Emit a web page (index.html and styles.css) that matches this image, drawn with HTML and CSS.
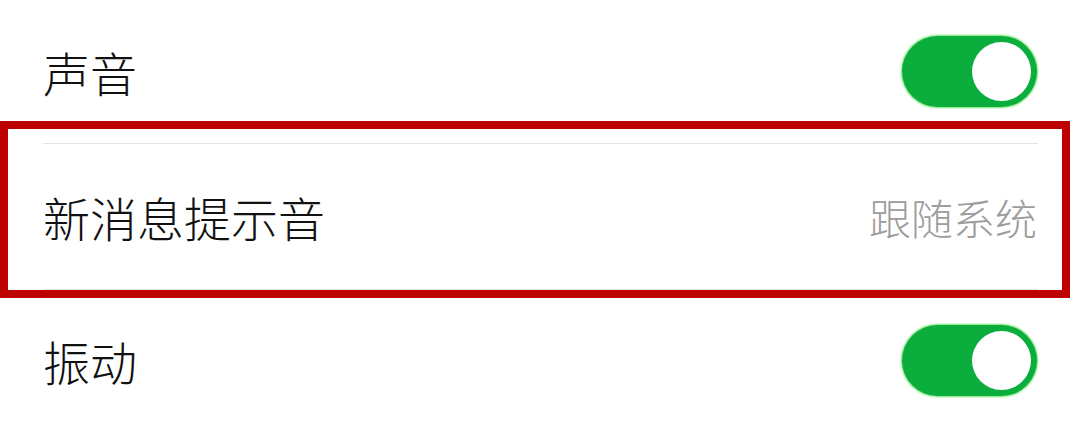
FILE: index.html
```html
<!DOCTYPE html>
<html lang="zh-CN">
<head>
<meta charset="utf-8">
<title>设置</title>
<link rel="stylesheet" href="styles.css">
</head>
<body>
<div class="page">
  <ul class="settings">
    <li class="row row-first">
      <span class="label">声音</span>
      <span class="switch is-on"><span class="knob"></span></span>
    </li>
    <li class="divider"></li>
    <li class="row row-mid">
      <span class="label">新消息提示音</span>
      <span class="value">跟随系统</span>
    </li>
    <li class="divider"></li>
    <li class="row row-last">
      <span class="label">振动</span>
      <span class="switch is-on"><span class="knob"></span></span>
    </li>
  </ul>
  <div class="highlight"></div>
</div>
</body>
</html>
```

FILE: styles.css
```css
* {
  box-sizing: border-box;
}

html,
body {
  margin: 0;
  padding: 0;
  background: #ffffff;
}

body {
  font-family: "Noto Sans CJK SC", "Noto Sans", sans-serif;
  color: #111111;
  overflow: hidden;
}

.page {
  position: relative;
  width: 1080px;
  height: 428px;
}

.settings {
  list-style: none;
  margin: 0;
  padding: 0;
}

.row {
  display: flex;
  align-items: center;
  justify-content: space-between;
  padding: 0 43px;
}

.row-first {
  height: 143px;
}

.row-mid {
  height: 145px;
}

.row-last {
  height: 140px;
}

.label {
  font-size: 47px;
  line-height: 1;
  font-weight: 300;
}

.value {
  font-size: 42px;
  line-height: 1;
  font-weight: 300;
  color: #9d9d9d;
}

.divider {
  height: 1px;
  margin: 0 42px 0 43px;
  background: #e4e4e6;
}

.switch {
  position: relative;
  width: 135px;
  height: 71px;
  border-radius: 36px;
  background: #cfcfcf;
  flex-shrink: 0;
}

.switch.is-on {
  background: #0bae3c;
  box-shadow: 0 0 2px 1px #6fe36f;
}

.knob {
  position: absolute;
  top: 6px;
  right: 6px;
  width: 59px;
  height: 59px;
  border-radius: 50%;
  background: #ffffff;
}

/* annotation frame around the ringtone row */
.highlight {
  position: absolute;
  left: 0;
  top: 121px;
  width: 1070px;
  height: 177px;
  border: 8px solid #bd0000;
  pointer-events: none;
}
```
